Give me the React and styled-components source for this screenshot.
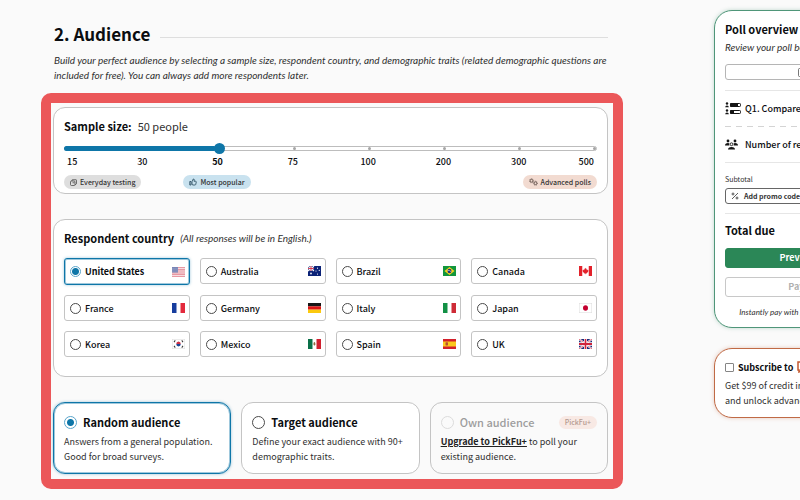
import React, { useState } from "react";
import styled, { createGlobalStyle, css } from "styled-components";

const BLUE = "#0e76a8";
const INK = "#0b0d10";

const GlobalStyle = createGlobalStyle`
  *, *::before, *::after { box-sizing: border-box; }
  html { overflow-x: hidden; }
  body {
    margin: 0;
    overflow-x: hidden;
    background: #fafafa;
    color: #303030;
    font-family: "Noto Sans CJK SC", "Noto Sans", sans-serif;
    font-size: 9px;
    line-height: 15px;
  }
  button, input { font-family: inherit; margin: 0; }
  h1, h2, h3, p, fieldset { margin: 0; padding: 0; border: 0; min-width: 0; }
`;

const italic = css`
  font-family: Lato, "Noto Sans", sans-serif;
  font-size: 10px;
  font-style: italic;
`;

const Page = styled.div`
  display: grid;
  grid-template-columns: minmax(582px, 1fr) 186px;
  column-gap: 91px;
  align-items: start;
  padding: 10px 0 11px 41px;
`;

const Main = styled.main`
  padding-top: 12px;
`;

const Intro = styled.header`
  padding: 0 9px 10px 13px;
`;

const TitleRow = styled.div`
  display: flex;
  align-items: center;
  gap: 10px;
  height: 24px;
  margin: 0 6px 7px 0;
  &::after {
    content: "";
    flex: 1;
    height: 1px;
    margin-top: 7px;
    background: #dedede;
  }
`;

const Title = styled.h1`
  font-size: 17px;
  line-height: 24px;
  font-weight: 700;
  color: ${INK};
`;

const Lead = styled.p`
  ${italic}
  line-height: 15px;
`;

const Frame = styled.div`
  display: flex;
  flex-direction: column;
  gap: 25px;
  padding: 4px 5px 5px 2px;
  border: 10px solid #eb5759;
  border-radius: 10px;
`;

const Card = styled.section`
  padding: ${(p) => p.$pad || "10px"};
  border: 1px solid #c4c4c4;
  border-radius: 12px;
  background: #fff;
`;

const CardHead = styled.div`
  display: flex;
  align-items: center;
  gap: 6px;
  height: 18px;
`;

const CardTitle = styled.h2`
  font-size: 11px;
  line-height: 18px;
  font-weight: 700;
  color: ${INK};
`;

const SizeValue = styled.output`
  font-size: 11px;
  line-height: 18px;
`;

const Note = styled.span`
  ${italic}
`;

const SliderWrap = styled.div`
  position: relative;
  display: flex;
  height: 12px;
  margin-top: 7px;
`;

const Slider = styled.input`
  appearance: none;
  width: 100%;
  height: 12px;
  background: transparent;
  &::-webkit-slider-runnable-track {
    height: 5px;
    border: 1px solid #bdbdbd;
    border-radius: 3px;
    background: #fff;
  }
  &::-webkit-slider-thumb {
    appearance: none;
    width: 11px;
    height: 11px;
    margin-top: -4px;
    border-radius: 50%;
    background: ${BLUE};
  }
`;

const Fill = styled.span`
  position: absolute;
  left: 0;
  top: 4px;
  height: 5px;
  border-radius: 3px;
  background: ${BLUE};
  pointer-events: none;
`;

const Ticks = styled.div`
  position: absolute;
  inset: 1px 1px 0 4px;
  display: flex;
  justify-content: space-between;
  align-items: center;
  pointer-events: none;
`;

const Tick = styled.span`
  width: 3px;
  height: 3px;
  border-radius: 50%;
  background: ${(p) => (p.$shown ? "#a5a5a5" : "transparent")};
`;

const Scale = styled.div`
  display: grid;
  grid-template-columns: 1fr repeat(6, 2fr) 1fr;
  padding: 0 3px;
  font-size: 9px;
  line-height: 16px;
  text-align: center;
  color: ${INK};
`;

const Mark = styled.span`
  font-weight: ${(p) => (p.$on ? 700 : 500)};
  &:first-child { text-align: left; }
  &:last-child { text-align: right; }
`;

const Badges = styled.div`
  display: flex;
  gap: 42px;
  margin-top: 5px;
`;

const Badge = styled.span`
  display: flex;
  align-items: center;
  gap: 3px;
  height: 14px;
  padding: 0 6px;
  border-radius: 7px;
  font-size: 7px;
  line-height: 14px;
  font-weight: 500;
  color: ${(p) => p.$fg || "#333"};
  background: ${(p) => p.$bg};
  white-space: nowrap;
  &:nth-child(3) { margin-left: auto; }
`;

const Countries = styled.div`
  display: grid;
  grid-template-columns: repeat(4, 1fr);
  gap: 10px;
  margin-top: 11px;
`;

const Radio = styled.input`
  appearance: none;
  flex: none;
  width: ${(p) => p.$size}px;
  height: ${(p) => p.$size}px;
  border: 1px solid #4a4a4a;
  border-radius: 50%;
  background: #fff;
  &:checked {
    border-color: #5aa5cb;
    background: radial-gradient(circle, ${BLUE} 0 3px, #fff 4px);
  }
  &:disabled { border-color: #dcdcdc; background: transparent; }
`;

const selected = css`
  border-color: ${BLUE};
  box-shadow: inset 0 0 0 1px ${BLUE}66, 0 0 3px ${BLUE}66;
`;

const Country = styled.label`
  display: flex;
  align-items: center;
  gap: 4px;
  height: ${(p) => (p.$on ? 27 : 26)}px;
  padding: 0 4px 0 5px;
  border: 1px solid #c4c4c4;
  border-radius: 3px;
  background: #fff;
  font-size: 9px;
  font-weight: ${(p) => (p.$on ? 700 : 500)};
  color: ${INK};
  ${(p) => p.$on && selected}
`;

const Flag = styled.svg`
  width: 13px;
  height: 10px;
  margin-left: auto;
  opacity: ${(p) => (p.$dim ? 0.65 : 1)};
`;

const Audiences = styled.div`
  display: grid;
  grid-template-columns: repeat(3, 1fr);
  gap: 10px;
`;

const Audience = styled.div`
  padding: 10px 10px 9px;
  border: 1px solid #c4c4c4;
  border-radius: 12px;
  background: ${(p) => (p.$off ? "#fafafa" : "#fff")};
  ${(p) => p.$on && selected}
`;

const AudienceHead = styled.label`
  display: flex;
  align-items: center;
  gap: 6px;
  height: 18px;
  margin-bottom: 3px;
  font-size: 11px;
  line-height: 18px;
  font-weight: ${(p) => (p.$off ? 500 : 700)};
  color: ${(p) => (p.$off ? "#9d9d9d" : INK)};
  ${Badge} {
    margin-left: auto;
    height: 13px;
  }
`;

const Text = styled.p`
  font-size: 9px;
  line-height: 15px;
`;

const Upgrade = styled.a`
  color: #222;
  font-weight: 700;
  text-decoration: underline;
`;

const Side = styled.aside`
  display: grid;
  gap: 20px;
`;

const Panel = styled.section`
  padding: ${(p) => p.$pad};
  border: 1px solid ${(p) => p.$edge};
  border-radius: 18px;
  background: #fff;
  box-shadow: 0 0 4px ${(p) => p.$edge}55;
  white-space: nowrap;
`;

const PanelTitle = styled.h2`
  font-size: 11px;
  line-height: 18px;
  font-weight: 700;
  color: ${INK};
`;

const PanelNote = styled.p`
  ${italic}
  line-height: 18px;
`;

const FinePrint = styled(PanelNote)`
  font-size: 8px;
  text-align: center;
`;

const Line = styled.hr`
  width: 100%;
  margin: 0;
  border: 0;
  border-top: 1px solid #e6e6e6;
`;

const DashedLine = styled(Line)`
  border: 0;
  height: 1px;
  background: repeating-linear-gradient(90deg, #d4d4d4 0 6px, transparent 6px 11px);
`;

const Item = styled.div`
  display: flex;
  align-items: center;
  gap: 4px;
  height: 35px;
  font-size: 9px;
  font-weight: 500;
  color: ${INK};
`;

const Button = styled.button`
  display: flex;
  align-items: center;
  justify-content: ${(p) => (p.$start ? "flex-start" : "center")};
  gap: 5px;
  width: 100%;
  height: ${(p) => (p.$small ? 16 : 20)}px;
  padding: 0 5px;
  border: 1px solid ${(p) => p.$edge || "#b5b5b5"};
  border-radius: 3px;
  background: ${(p) => p.$bg || "#fff"};
  color: ${(p) => p.$fg || "#333"};
  font-size: ${(p) => (p.$small ? 7 : 9)}px;
  line-height: 14px;
  font-weight: 700;
`;

const Overview = styled.div`
  margin: 8px 0 10px;
`;

const Subtotal = styled.p`
  font-size: 7px;
  line-height: 12px;
  margin: 10px 0 3px;
`;

const Promo = styled.div`
  margin-bottom: 9px;
`;

const Total = styled(PanelTitle)`
  margin: 7px 0 9px;
`;

const Actions = styled.div`
  display: grid;
  gap: 9px;
  margin-bottom: 6px;
`;

const Subscribe = styled.label`
  display: flex;
  align-items: center;
  gap: 4px;
  height: 18px;
  margin-bottom: 2px;
  font-size: 9px;
  font-weight: 700;
  color: ${INK};
`;

const Tickbox = styled.input`
  appearance: none;
  width: 9px;
  height: 9px;
  border: 1px solid #858585;
  border-radius: 1px;
  background: #fff;
`;

const FLAGS = {
  us: (
    <>
      <rect width="26" height="18" fill="#fff" />
      <path d="M0 1.4h26M0 5.2h26M0 9h26M0 12.8h26M0 16.6h26" stroke="#d22f45" strokeWidth="2" />
      <rect width="12" height="10" fill="#31448f" />
      <path d="M1 2.5h10M1 5h10M1 7.5h10" stroke="#cdd3ee" strokeWidth=".8" strokeDasharray="1 1.2" />
    </>
  ),
  au: (
    <>
      <rect width="26" height="18" fill="#0b2277" />
      <path d="M0 0l12 9M12 0L0 9" stroke="#fff" strokeWidth="2" />
      <path d="M6 0v9M0 4.5h12" stroke="#fff" strokeWidth="3" />
      <path d="M6 0v9M0 4.5h12" stroke="#d0233c" strokeWidth="1.6" />
      <g fill="#fff"><circle cx="6" cy="13.5" r="1.7" /><circle cx="19" cy="4" r="1.1" /><circle cx="16" cy="9" r="1.1" /><circle cx="22.5" cy="8" r="1.1" /><circle cx="19" cy="14.5" r="1.1" /></g>
    </>
  ),
  br: (
    <>
      <rect width="26" height="18" fill="#12963c" />
      <path d="M13 2l10 7-10 7L3 9z" fill="#f8d21b" />
      <circle cx="13" cy="9" r="4" fill="#1c3580" />
      <path d="M9.4 8q4-.6 7 2.4" stroke="#fff" fill="none" />
    </>
  ),
  ca: (
    <>
      <rect width="26" height="18" fill="#fff" />
      <path d="M0 0h6.5v18H0zM19.5 0H26v18h-6.5z" fill="#e3222b" />
      <path d="M13 3l1.3 2.3 1.4-.6-.5 3 2-1.4.3 1.2 1.5-.1-.9 2.4.7.6-3.4 2.1.2 1.2-2.2-.3V15h-.8v-1.6l-2.2.3.2-1.2-3.4-2.1.7-.6L7 7.4l1.5.1.3-1.2 2 1.4-.5-3 1.4.6z" fill="#e3222b" />
    </>
  ),
  fr: <><rect width="26" height="18" fill="#fff" /><path d="M0 0h9v18H0z" fill="#173d9e" /><path d="M17 0h9v18h-9z" fill="#e3293c" /></>,
  de: <><rect width="26" height="6" fill="#161616" /><rect y="6" width="26" height="6" fill="#dc1414" /><rect y="12" width="26" height="6" fill="#fbc90e" /></>,
  it: <><rect width="26" height="18" fill="#fff" /><path d="M0 0h9v18H0z" fill="#129045" /><path d="M17 0h9v18h-9z" fill="#ce2b37" /></>,
  jp: <><rect x=".5" y=".5" width="25" height="17" fill="#fff" stroke="#ddd" /><circle cx="13" cy="9" r="5" fill="#c3002f" /></>,
  kr: (
    <>
      <rect x=".5" y=".5" width="25" height="17" fill="#fff" stroke="#ddd" />
      <path d="M8.5 9a4.5 4.5 0 019 0z" fill="#cf2f44" />
      <path d="M8.5 9a4.5 4.5 0 009 0z" fill="#1b4794" />
      <path d="M4 5.5l2.5-3M19.5 2.5l2.5 3M4 12.5l2.5 3M19.5 15.5l2.5-3" stroke="#333" strokeWidth="2" />
    </>
  ),
  mx: (
    <>
      <rect width="26" height="18" fill="#fff" /><path d="M0 0h9v18H0z" fill="#0a7048" /><path d="M17 0h9v18h-9z" fill="#d0202f" />
      <path d="M11 7q2-3 3.5 0T13 12q-3-1-2-5z" fill="#8d6a3d" />
    </>
  ),
  es: <><rect width="26" height="18" fill="#d3202a" /><rect y="4.5" width="26" height="9" fill="#fbc91c" /><rect x="5" y="6" width="5" height="5.5" rx="1" fill="#b9502d" /></>,
  uk: (
    <>
      <rect width="26" height="18" fill="#1b2c7a" />
      <path d="M0 0l26 18M26 0L0 18" stroke="#fff" strokeWidth="3.6" />
      <path d="M0 0l26 18M26 0L0 18" stroke="#d0233c" strokeWidth="1.3" />
      <path d="M13 0v18M0 9h26" stroke="#fff" strokeWidth="6" />
      <path d="M13 0v18M0 9h26" stroke="#d0233c" strokeWidth="3.4" />
    </>
  ),
};

const COUNTRIES = [
  ["us", "United States"], ["au", "Australia"], ["br", "Brazil"], ["ca", "Canada"],
  ["fr", "France"], ["de", "Germany"], ["it", "Italy"], ["jp", "Japan"],
  ["kr", "Korea"], ["mx", "Mexico"], ["es", "Spain"], ["uk", "UK"],
];

const SIZES = [15, 30, 50, 75, 100, 200, 300, 500];

const DiceIcon = () => (
  <svg width="7" height="7" viewBox="0 0 14 14" fill="none" stroke="#444" strokeWidth="1.5">
    <rect x="1" y="4" width="9" height="9" rx="2" />
    <path d="M3.5 4l1-2.5h7.5q1 0 1 1v7L10 12M5 7.5h4" />
  </svg>
);

const ThumbIcon = () => (
  <svg width="8" height="8" viewBox="0 0 16 16" fill="none" stroke="#24475a" strokeWidth="1.6" strokeLinejoin="round">
    <path d="M1.5 7h2.5v7H1.5zM6 7.5L8.5 2q2-.5 2 1.5L10 6.5h3.5q1.2.3 1 1.5l-1 4.8q-.3 1.2-1.5 1.2H8l-2-1z" />
  </svg>
);

const GearsIcon = () => (
  <svg width="9" height="8" viewBox="0 0 18 16" fill="none" stroke="#55453f">
    <circle cx="5" cy="5.5" r="2.8" strokeWidth="1.6" />
    <circle cx="5" cy="5.5" r="4.2" strokeWidth="1.2" strokeDasharray="1.6 1.7" />
    <circle cx="13" cy="10.5" r="2.8" strokeWidth="1.6" />
    <circle cx="13" cy="10.5" r="4.2" strokeWidth="1.2" strokeDasharray="1.6 1.7" />
  </svg>
);

const CompareIcon = () => (
  <svg width="16" height="13" viewBox="0 0 16 13" fill="#151515">
    <circle cx="2" cy="1.5" r="1.2" /><path d="M.2 5.2q0-1.8 1.8-1.8t1.8 1.8z" />
    <circle cx="2" cy="8.5" r="1.2" /><path d="M.2 12.2q0-1.8 1.8-1.8t1.8 1.8z" />
    <rect x="5.5" y="1.5" width="10" height="3" rx=".8" fill="none" stroke="#151515" />
    <rect x="5" y="1" width="8" height="4" rx="1" />
    <rect x="5.5" y="8.5" width="10" height="3" rx=".8" fill="none" stroke="#151515" />
    <rect x="5" y="8" width="4" height="4" rx="1" />
  </svg>
);

const PeopleIcon = () => (
  <svg width="16" height="11" viewBox="0 0 32 22" fill="#151515">
    <circle cx="6" cy="4" r="2.8" /><circle cx="20" cy="4" r="2.8" />
    <path d="M0 13q0-5 6-5 2 0 3 1-2 2 0 4H0zM26 13q0-5-6-5-2 0-3 1 2 2 0 4h9z" />
    <circle cx="13" cy="10.5" r="2.8" fill="none" stroke="#151515" strokeWidth="1.8" />
    <path d="M6 21q0-5 7-5t7 5z" />
  </svg>
);

const PercentIcon = () => (
  <svg width="8" height="8" viewBox="0 0 16 16" fill="none" stroke="#333" strokeWidth="1.6">
    <path d="M2 14L14 2" /><circle cx="4" cy="4" r="2" /><circle cx="12" cy="12" r="2" />
  </svg>
);

const PageIcon = () => (
  <svg width="18" height="9" viewBox="0 0 36 18" fill="none" stroke="#555" strokeWidth="1.6">
    <rect x="1" y="1" width="14" height="16" rx="2" /><path d="M5 6h6M5 10h6M24 7l5 5 5-5" />
  </svg>
);

const PlusMark = () => (
  <svg width="20" height="12" viewBox="0 0 20 12" fill="none" stroke="#c55a30" strokeWidth="1.5">
    <path d="M1 1h18v8H5l-3 2V9H1z" />
  </svg>
);

export default function App() {
  const [step, setStep] = useState(2);
  const [country, setCountry] = useState("us");
  const [audience, setAudience] = useState("random");

  return (
    <>
      <GlobalStyle />
      <Page>
        <Main>
          <Intro>
            <TitleRow><Title>2. Audience</Title></TitleRow>
            <Lead>
              Build your perfect audience by selecting a sample size, respondent country, and demographic traits (related demographic questions are included for free). You can always add more respondents later.
            </Lead>
          </Intro>

          <Frame>
            <Card $pad="9px 10px 4px">
              <CardHead>
                <CardTitle as="label" htmlFor="sample">Sample size:</CardTitle>
                <SizeValue htmlFor="sample">{SIZES[step]} people</SizeValue>
              </CardHead>
              <SliderWrap>
                <Slider id="sample" type="range" min="0" max="7" value={step} onChange={(e) => setStep(Number(e.target.value))} />
                <Fill style={{ width: `${(step / 7) * 100}%` }} />
                <Ticks>{SIZES.map((s, i) => <Tick key={s} $shown={i > step} />)}</Ticks>
              </SliderWrap>
              <Scale>{SIZES.map((s, i) => <Mark key={s} $on={i === step}>{s}</Mark>)}</Scale>
              <Badges>
                <Badge $bg="#dedede"><DiceIcon />Everyday testing</Badge>
                <Badge $bg="#c9e2ef"><ThumbIcon />Most popular</Badge>
                <Badge $bg="#f2dbd1"><GearsIcon />Advanced polls</Badge>
              </Badges>
            </Card>

            <Card $pad="9px 10px 19px">
              <CardHead>
                <CardTitle>Respondent country</CardTitle>
                <Note>(All responses will be in English.)</Note>
              </CardHead>
              <Countries>
                {COUNTRIES.map(([code, name]) => (
                  <Country key={code} $on={country === code}>
                    <Radio type="radio" name="country" $size={11} checked={country === code} onChange={() => setCountry(code)} />
                    {name}
                    <Flag viewBox="0 0 26 18" preserveAspectRatio="none" $dim={code === "us"} aria-hidden="true">{FLAGS[code]}</Flag>
                  </Country>
                ))}
              </Countries>
            </Card>

            <Audiences>
              <Audience $on={audience === "random"}>
                <AudienceHead>
                  <Radio type="radio" name="audience" $size={13} checked={audience === "random"} onChange={() => setAudience("random")} />
                  Random audience
                </AudienceHead>
                <Text>Answers from a general population. Good for broad surveys.</Text>
              </Audience>
              <Audience $on={audience === "target"}>
                <AudienceHead>
                  <Radio type="radio" name="audience" $size={13} checked={audience === "target"} onChange={() => setAudience("target")} />
                  Target audience
                </AudienceHead>
                <Text>Define your exact audience with 90+ demographic traits.</Text>
              </Audience>
              <Audience $off>
                <AudienceHead $off>
                  <Radio type="radio" name="audience" $size={13} disabled />
                  Own audience
                  <Badge $bg="#f8e9e4" $fg="#b59a91">PickFu+</Badge>
                </AudienceHead>
                <Text><Upgrade href="#upgrade">Upgrade to PickFu+</Upgrade> to poll your existing audience.</Text>
              </Audience>
            </Audiences>
          </Frame>
        </Main>

        <Side>
          <Panel $edge="#4f9679" $pad="9px 10px 6px">
            <PanelTitle>Poll overview</PanelTitle>
            <PanelNote>Review your poll below</PanelNote>
            <Overview><Button $small aria-label="Copy"><PageIcon /></Button></Overview>
            <Line />
            <Item><CompareIcon />Q1. Compare</Item>
            <DashedLine />
            <Item><PeopleIcon />Number of respondents</Item>
            <Line />
            <Subtotal>Subtotal</Subtotal>
            <Promo><Button $small $start $edge="#666"><PercentIcon />Add promo code</Button></Promo>
            <Line />
            <Total>Total due</Total>
            <Actions>
              <Button $bg="#2b8757" $edge="#2b8757" $fg="#fff">Preview poll</Button>
              <Button $fg="#b0b0b0" $edge="#c8c8c8">Pay now</Button>
            </Actions>
            <FinePrint>Instantly pay with prepaid account credit</FinePrint>
          </Panel>

          <Panel $edge="#c06a45" $pad="9px 10px 9px">
            <Subscribe><Tickbox type="checkbox" />Subscribe to<PlusMark /></Subscribe>
            <Text>Get $99 of credit instantly<br />and unlock advanced features</Text>
          </Panel>
        </Side>
      </Page>
    </>
  );
}
